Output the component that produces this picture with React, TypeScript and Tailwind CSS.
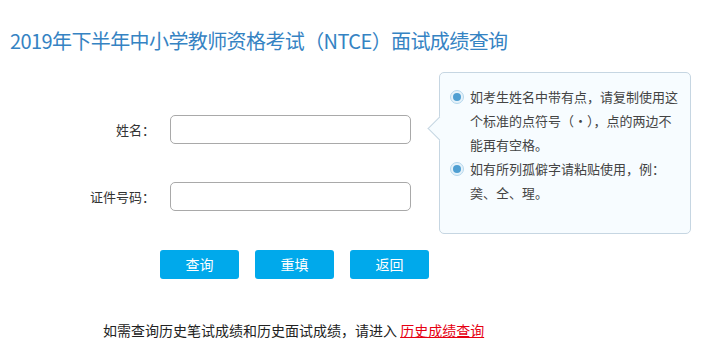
import React from 'react';

const font = "font-['Microsoft_YaHei','Noto_Sans_CJK_SC',sans-serif]";

function Bullet() {
  return (
    <span className="mt-[5px] flex h-[14px] w-[14px] shrink-0 items-center justify-center rounded-full border border-[#b5d7ec] bg-[#e6f2fa]">
      <span className="h-[8px] w-[8px] rounded-full bg-[#4f9fd2]" />
    </span>
  );
}

export default function App() {
  return (
    <div className={`h-[360px] w-[702px] overflow-hidden bg-white ${font}`}>
      <h1 className="pl-[10px] pt-[28px] text-[20px] leading-[26px] tracking-[-0.6px] text-[#3583c3]">
        2019年下半年中小学教师资格考试（NTCE）面试成绩查询
      </h1>

      <div className="mt-[18px] flex">
        {/* form */}
        <div className="w-[439px] pt-[43px]">
          <div className="flex items-center">
            <label className="w-[155px] text-right text-[13px] text-[#333]">姓名：</label>
            <input className="ml-[15px] h-[29px] w-[241px] rounded-[5px] border border-[#a9a9a9] bg-white px-2 text-[13px] outline-none" />
          </div>
          <div className="mt-[38px] flex items-center">
            <label className="w-[155px] text-right text-[13px] text-[#333]">证件号码：</label>
            <input className="ml-[15px] h-[29px] w-[241px] rounded-[5px] border border-[#a9a9a9] bg-white px-2 text-[13px] outline-none" />
          </div>
          <div className="mt-[39px] flex gap-[16px] pl-[160px]">
            {['查询', '重填', '返回'].map((t) => (
              <button
                key={t}
                className="h-[29px] w-[79px] rounded-[3px] bg-[#00a9eb] text-[14px] text-white"
              >
                {t}
              </button>
            ))}
          </div>
        </div>

        {/* tip */}
        <div className="relative h-[162px] w-[252px] rounded-[5px] border border-[#c6d6e2] bg-[#f7fcff] pl-[10px] pr-[8px] pt-[12px]">
          <span className="absolute left-[-9px] top-[47px] h-[17px] w-[17px] rotate-45 border-b border-l border-[#c6d6e2] bg-[#f7fcff]" />
          <div className="relative flex gap-[6px] text-[13px] leading-[24px] text-[#444]">
            <Bullet />
            <p>如考生姓名中带有点，请复制使用这个标准的点符号（·），点的两边不能再有空格。</p>
          </div>
          <div className="relative flex gap-[6px] text-[13px] leading-[24px] text-[#444]">
            <Bullet />
            <p>如有所列孤僻字请粘贴使用，例：<br />䶮、仝、瑆。</p>
          </div>
        </div>
      </div>

      <p className="mt-[41px] pl-[103px] text-[14px] leading-[20px] text-[#222]">
        如需查询历史笔试成绩和历史面试成绩，请进入{' '}
        <a href="#" className="text-[#e60012] underline">历史成绩查询</a>
      </p>
    </div>
  );
}
